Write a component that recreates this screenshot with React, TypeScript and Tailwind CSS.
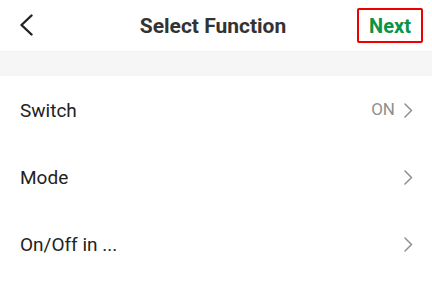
const rows = [
  { label: "Switch", value: "ON" },
  { label: "Mode", value: "" },
  { label: "On/Off in ...", value: "" },
]

export default function App() {
  return (
    <div className="w-[432px] h-[282px] bg-white overflow-hidden font-['Roboto',sans-serif]">
      {/* Header */}
      <div className="relative h-[51px] flex items-center justify-center">
        <button className="absolute left-[19px] top-[14px] text-[#222]">
          <svg width="15" height="22" viewBox="0 0 15 22" fill="none">
            <polyline points="12.5,1.5 2.5,11 12.5,20.5" stroke="currentColor" strokeWidth="2.4" strokeLinecap="round" strokeLinejoin="round" />
          </svg>
        </button>
        <h1 className="text-[21px] font-bold text-[#333] mt-[3px] mr-[6px]">Select Function</h1>
        <div className="absolute left-[357px] top-[8px] w-[66px] h-[35px] border-2 border-[#ee0000] rounded-[2px] flex items-center justify-center">
          <span className="text-[20px] font-bold text-[#0b9447] mt-[1px]">Next</span>
        </div>
      </div>

      {/* Spacer band */}
      <div className="h-[25px] bg-[#f6f6f6] border-t border-[#f0f0f0]" />

      {/* Rows */}
      <div className="flex flex-col">
        {rows.map((row) => (
          <div key={row.label} className="h-[67px] flex items-center justify-between pl-5 pr-[19px]">
            <span className="text-[19px] text-[#222] mt-[3px]">{row.label}</span>
            <div className="flex items-center gap-[9px] text-[#8f8f8f] mt-[1px]">
              {row.value && <span className="text-[17px]">{row.value}</span>}
              <svg width="9" height="15" viewBox="0 0 9 15" fill="none">
                <polyline points="1,1 7.5,7.5 1,14" stroke="currentColor" strokeWidth="1.5" strokeLinecap="round" strokeLinejoin="round" />
              </svg>
            </div>
          </div>
        ))}
      </div>
    </div>
  )
}
